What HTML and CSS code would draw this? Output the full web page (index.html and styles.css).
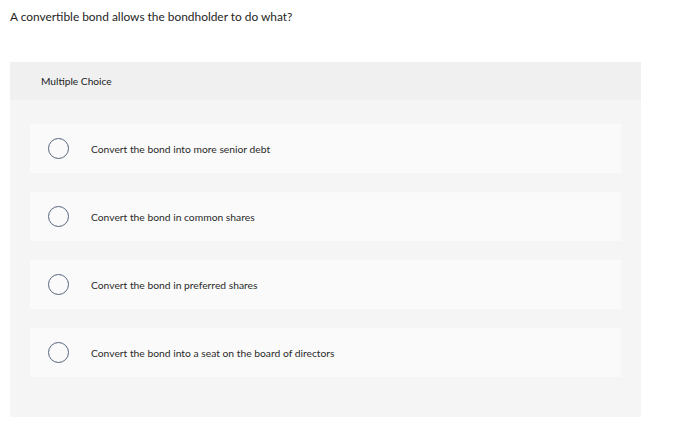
FILE: index.html
```html
<!DOCTYPE html>
<html>
<head>
<meta charset="utf-8">
<link rel="stylesheet" href="styles.css">
</head>
<body>
<div class="page">
  <p class="question">A convertible bond allows the bondholder to do what?</p>
  <section class="panel">
    <header class="panel-head">Multiple Choice</header>
    <div class="options">
      <div class="option"><span class="radio"></span><span class="label">Convert the bond into more senior debt</span></div>
      <div class="option"><span class="radio"></span><span class="label">Convert the bond in common shares</span></div>
      <div class="option"><span class="radio"></span><span class="label">Convert the bond in preferred shares</span></div>
      <div class="option"><span class="radio"></span><span class="label">Convert the bond into a seat on the board of directors</span></div>
    </div>
  </section>
</div>
</body>
</html>
```

FILE: styles.css
```css
html, body {
  margin: 0;
  padding: 0;
  background: #ffffff;
}
body {
  font-family: Lato, "Liberation Sans", sans-serif;
  color: #222;
}
.page {
  padding: 9px 59px 0 10px;
}
.question {
  margin: 0;
  font-size: 11.9px;
  line-height: 16px;
  color: #1e1e1e;
}
.panel {
  margin-top: 37px;
  width: 631px;
  background: #f5f5f5;
}
.panel-head {
  height: 38px;
  background: #f0f0f0;
  padding-left: 31px;
  display: flex;
  align-items: center;
  font-size: 10.2px;
  color: #222;
}
.options {
  padding: 24px 20px 40px 20px;
  display: flex;
  flex-direction: column;
  gap: 19px;
}
.option {
  height: 49px;
  background: #fafafa;
  display: flex;
  align-items: center;
}
.radio {
  width: 19px;
  height: 19px;
  border: 1.5px solid #55657a;
  border-radius: 50%;
  margin-left: 18px;
  flex: none;
}
.label {
  margin-left: 22px;
  font-size: 10.3px;
  color: #2a2a2a;
}
```
